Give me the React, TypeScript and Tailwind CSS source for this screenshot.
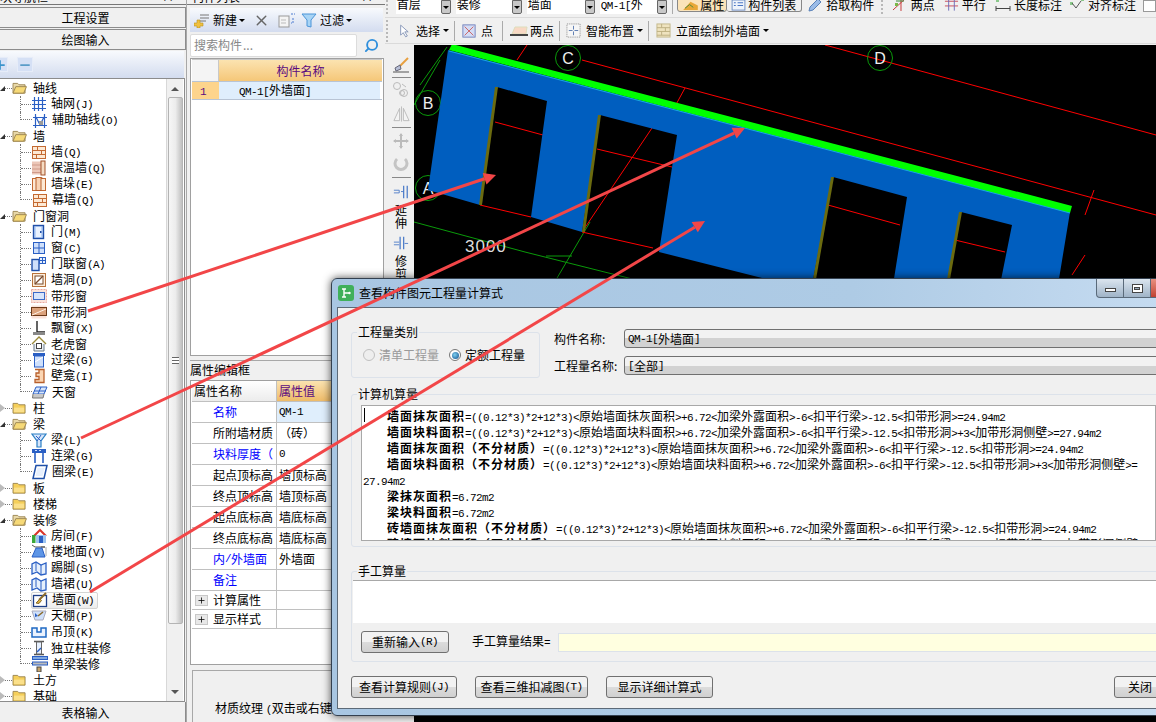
import React from 'react';
import { Search, X, Minus, Plus } from 'lucide-react';

// ascii runs are drawn narrower, the original uses a 6px wide bitmap latin
const Txt: React.FC<{ t: string }> = ({ t }) => (
  <>
    {t.split(/([\x20-\x7e]+)/).map((part, i) =>
      /[\x20-\x7e]/.test(part) ? (
        <span key={i} className="font-['Liberation_Mono',monospace] text-[11px] tracking-[-0.6px] font-normal whitespace-pre">
          {part}
        </span>
      ) : (
        <span key={i}>{part}</span>
      ),
    )}
  </>
);

const Ico: React.FC<{ children: React.ReactNode; className?: string }> = ({ children, className }) => (
  <svg viewBox="0 0 16 16" className={className ?? 'w-4 h-4 shrink-0'} fill="none" strokeWidth="1">
    {children}
  </svg>
);

const BL = '#2a5fc4';
const Brick = (
  <Ico>
    <rect x="1.5" y="2.5" width="13" height="12" fill="#fde9d4" stroke="#c46a32" />
    <path d="M1.5 6.5h13M1.5 10.5h13M6.5 2.500v4M10.5 6.500v4M5.5 10.500v4" stroke="#c46a32" />
  </Ico>
);
const Flag = (
  <Ico>
    <path d="M1 14V4l4-2 5 3 5-2v11l-5 1-4-3z" fill="#e6f0fc" stroke={BL} strokeWidth="1.3" />
    <path d="M5 2v9M10 5v10" stroke={BL} />
  </Ico>
);

const icons: Record<string, React.ReactNode> = {
  grid: (
    <Ico>
      <path d="M1 4.500h14M1 8.500h14M1 12.500h14M3.500 1v14M7.500 1v14M11.500 1v14" stroke={BL} strokeWidth="1.2" />
    </Ico>
  ),
  aux: (
    <Ico>
      <path d="M1 13.500h14M3.500 2v14M12.500 2v14M1 5.500l14 0M4 5l4 8 4-8" stroke={BL} strokeWidth="1.2" />
      <rect x="7" y="9" width="4" height="4" fill="#9a9a9a" />
    </Ico>
  ),
  brick: Brick,
  insul: (
    <Ico>
      <rect x="1" y="1.500" width="9" height="13" fill="#ecc7b8" />
      <path d="M1 5h9M1 9h9M1 12.500h9" stroke="#cf9a8a" />
      <rect x="10" y="1" width="4" height="14" fill="#f5dcc4" stroke="#a2522a" />
    </Ico>
  ),
  pier: (
    <Ico>
      <rect x="1.500" y="2.500" width="13" height="12" fill="#fde9d4" stroke="#c46a32" />
      <rect x="5" y="1.500" width="5" height="13" fill="#f8d3b4" stroke="#b8602c" />
      <path d="M10 1.500l2 1" stroke="#b8602c" />
    </Ico>
  ),
  door: (
    <Ico>
      <rect x="2.500" y="1.500" width="10" height="13" fill="#bcd4f8" stroke="#1f4fa8" strokeWidth="1.4" />
      <rect x="5" y="3" width="5" height="10" fill="#eaf2fe" />
      <rect x="9" y="7" width="1.500" height="2" fill="#1f4fa8" />
    </Ico>
  ),
  win: (
    <Ico>
      <rect x="2.500" y="2.500" width="11" height="11" fill="#cfe0fb" stroke="#2a5fc4" />
      <path d="M8 2.500v11M2.500 8h11" stroke="#2a5fc4" />
    </Ico>
  ),
  doorwin: (
    <Ico>
      <rect x="1" y="3.500" width="7" height="11" fill="#cfe0fb" stroke="#1f4fa8" strokeWidth="1.4" />
      <rect x="8.500" y="1.500" width="6" height="6" fill="#e7f0fd" stroke="#2a5fc4" />
      <path d="M11.500 1.500v6M8.500 4.500h6" stroke="#2a5fc4" />
    </Ico>
  ),
  hole: (
    <Ico>
      <rect x="1.500" y="1.500" width="13" height="13" fill="#fdeedd" stroke="#b8733c" />
      <rect x="4" y="4" width="8" height="8" fill="#fff" stroke="#7a4a2a" />
      <path d="M4 12l8-8" stroke="#7a4a2a" strokeWidth="1.3" />
    </Ico>
  ),
  stripwin: (
    <Ico>
      <rect x="0.500" y="1.500" width="15" height="13" fill="#fbe3da" stroke="#e8a8a0" strokeDasharray="2 1" />
      <rect x="2.500" y="4.500" width="11" height="7" fill="#d8e4fb" stroke="#3d6ac8" />
    </Ico>
  ),
  striphole: (
    <Ico>
      <rect x="0.500" y="1.500" width="15" height="13" fill="#fbe3da" />
      <rect x="0.500" y="3.500" width="15" height="8" fill="#dca27c" stroke="#6e3a18" />
      <path d="M1 11l14-6" stroke="#fff2e6" />
    </Ico>
  ),
  bay: (
    <Ico>
      <path d="M6 1v11h8" stroke="#222" strokeWidth="1.4" />
      <rect x="2" y="12" width="12" height="3" fill="#888" />
    </Ico>
  ),
  dormer: (
    <Ico>
      <path d="M1 8l7-7 7 7" stroke="#9a8a3a" strokeWidth="1.4" />
      <path d="M3 8v7h10V8" fill="#e8eef4" stroke="#6a7a8a" />
      <rect x="5.500" y="7.500" width="5" height="5" fill="#fff" stroke="#444" />
    </Ico>
  ),
  lintel: (
    <Ico>
      <rect x="2" y="1" width="12" height="3" fill="#2a5fc4" />
      <rect x="3.500" y="4" width="9" height="11" fill="#cfe0fb" stroke="#2a5fc4" />
      <path d="M12 5l-8 5" stroke="#fff" />
    </Ico>
  ),
  niche: (
    <Ico>
      <path d="M4 1.500h9v13H4v-3h4v-3H5V5h3V1.500" fill="#fbd6b4" stroke="#b8602c" strokeWidth="1.3" />
    </Ico>
  ),
  sky: (
    <Ico>
      <path d="M4 3h11l-3 7H1z" fill="#d8e6fb" stroke="#2a5fc4" />
      <path d="M9 3l-3 7M2 7h12" stroke="#2a5fc4" />
      <path d="M1 10l-.5 4H11l1-4" fill="#c8c8c8" stroke="#777" />
    </Ico>
  ),
  beam: (
    <Ico>
      <path d="M1 2h14L10 9v6H6V9z" fill="#d6e6fb" stroke="#2a7fc4" strokeWidth="1.2" />
      <path d="M5 4l5 5M10 3l-4 6" stroke="#2a5fc4" />
    </Ico>
  ),
  link: (
    <Ico>
      <rect x="1" y="1" width="14" height="4" fill="#2a5fc4" />
      <path d="M4 2.500h2M8 2.500h2" stroke="#cfe0fb" />
      <path d="M4 5v10M12 5v10" stroke="#2a5fc4" strokeWidth="1.6" />
    </Ico>
  ),
  ring: (
    <Ico>
      <path d="M4 1.500h11l-3 13H1z" fill="#fff" stroke="#1f4fa8" strokeWidth="1.5" />
      <path d="M5.500 4h7l-2 8h-7z" fill="#e7f0fd" />
    </Ico>
  ),
  room: (
    <Ico className="w-[16px] h-[16px] shrink-0">
      <path d="M3 8l6-6 6 6" stroke="#d8342a" strokeWidth="2" />
      <rect x="1" y="7" width="3.500" height="8" fill="#3aa83a" />
      <rect x="5" y="7" width="10" height="8" fill="#9cc4f0" />
      <rect x="8" y="8" width="4" height="7" fill="#2a5fc4" />
    </Ico>
  ),
  floor: (
    <Ico>
      <path d="M1 1l3 2 10 0-4 0" stroke="#555" />
      <path d="M5 4h6l3 9H1z" fill="#5d95e6" stroke="#2a5fc4" />
      <path d="M15 3v9" stroke="#aaa" />
    </Ico>
  ),
  skirt: Flag,
  wallface: (
    <Ico>
      <rect x="1.500" y="3.500" width="13" height="11" fill="#fff" stroke="#1f3f88" strokeWidth="1.3" />
      <path d="M14 1L7 8" stroke="#8a6a2a" strokeWidth="2" />
      <path d="M8 7L4 11l3 .5 2.500-3z" fill="#d8b040" stroke="#8a6a2a" />
    </Ico>
  ),
  ceiling: (
    <Ico>
      <path d="M1 3h14l-3 9H4z" fill="#cfe0fb" stroke="#aab" />
      <path d="M12 4L7 8" stroke="#8a6a2a" strokeWidth="1.6" />
      <path d="M4 5l3 3-3 1z" fill="#2a5fc4" />
    </Ico>
  ),
  hung: (
    <Ico>
      <path d="M1 4h5v4h4V4h5v9H1z" fill="#eaf2fe" stroke="#1f6ac4" strokeWidth="1.5" />
    </Ico>
  ),
  column: (
    <Ico>
      <path d="M3 1.500h10M3 14.500h10" stroke="#555" strokeWidth="1.6" />
      <rect x="5.500" y="2" width="5" height="12" fill="#e7f0fd" stroke="#666" />
      <path d="M6 12l4-4" stroke="#2a5fc4" strokeWidth="1.5" />
    </Ico>
  ),
  single: (
    <Ico>
      <rect x="0.500" y="0.500" width="15" height="3" fill="#7fa8e0" stroke="#2a5fc4" />
      <rect x="0.500" y="6" width="15" height="3" fill="#bcbcbc" stroke="#2a5fc4" />
      <rect x="5" y="11" width="4" height="5" fill="#c8a468" stroke="#444" />
    </Ico>
  ),
};

const Folder: React.FC<{ open?: boolean }> = ({ open }) => (
  <svg viewBox="0 0 16 14" className="w-[15px] h-[13px] shrink-0">
    <path d="M1 3V1.500h5L7.500 3H14v9H1z" fill={open ? '#e8d8a8' : '#f5cf5a'} stroke="#9a8450" />
    {open ? <path d="M1 12l3-7h11.500l-3 7z" fill="#f6d977" stroke="#9a8450" /> : <path d="M2 6h11v5H2z" fill="#fbe08a" />}
  </svg>
);

type Node = { name: string; open?: boolean; items?: [string, string][] };

const tree: Node[] = [
  { name: '轴线', open: true, items: [['轴网(J)', 'grid'], ['辅助轴线(O)', 'aux']] },
  { name: '墙', open: true, items: [['墙(Q)', 'brick'], ['保温墙(Q)', 'insul'], ['墙垛(E)', 'pier'], ['幕墙(Q)', 'brick']] },
  {
    name: '门窗洞',
    open: true,
    items: [
      ['门(M)', 'door'], ['窗(C)', 'win'], ['门联窗(A)', 'doorwin'], ['墙洞(D)', 'hole'], ['带形窗', 'stripwin'], ['带形洞', 'striphole'],
      ['飘窗(X)', 'bay'], ['老虎窗', 'dormer'], ['过梁(G)', 'lintel'], ['壁龛(I)', 'niche'], ['天窗', 'sky'],
    ],
  },
  { name: '柱' },
  { name: '梁', open: true, items: [['梁(L)', 'beam'], ['连梁(G)', 'link'], ['圈梁(E)', 'ring']] },
  { name: '板' },
  { name: '楼梯' },
  {
    name: '装修',
    open: true,
    items: [
      ['房间(F)', 'room'], ['楼地面(V)', 'floor'], ['踢脚(S)', 'skirt'], ['墙裙(U)', 'skirt'], ['墙面(W)', 'wallface'], ['天棚(P)', 'ceiling'],
      ['吊顶(K)', 'hung'], ['独立柱装修', 'column'], ['单梁装修', 'single'],
    ],
  },
  { name: '土方' },
  { name: '基础' },
];

const NavButton: React.FC<{ label: string }> = ({ label }) => (
  <div className="h-[21px] mb-px pr-[14px] flex items-center justify-center bg-[#f0f0f0] border border-[#8c8c8c] border-l-0 text-[12px] leading-4 text-black">
    {label}
  </div>
);

const LeftPanel = () => (
  <aside className="w-[186px] h-full shrink-0 flex flex-col bg-[#f0f0f0]">
    <div className="h-[5px] overflow-hidden border-b border-[#777] flex justify-between pr-3">
      <span className="text-[12px] leading-4 -mt-[11px]">块导航栏</span>
      <span className="text-[12px] leading-4 -mt-[11px]">- ×</span>
    </div>
    <div className="pt-[2px]">
      <NavButton label="工程设置" />
      <NavButton label="绘图输入" />
    </div>
    <div className="h-[27px] flex items-center gap-[9px] -ml-2 bg-gradient-to-b from-[#f8fafd] to-[#d3dcef] mr-[2px]">
      <span className="w-4 h-[15px] flex items-center justify-center bg-[#d5e0f5] border border-[#e6ecf8]">
        <Plus size={14} strokeWidth={3} className="text-[#3a94cc]" />
      </span>
      <span className="w-4 h-[15px] flex items-center justify-center bg-[#d5e0f5] border border-[#e6ecf8]">
        <Minus size={14} strokeWidth={3} className="text-[#5a9cc8]" />
      </span>
    </div>
    <div className="flex-1 flex min-h-0 bg-white border border-l-0 border-[#8c8c8c] mr-px overflow-hidden">
      <div className="flex-1 pt-[1px] overflow-hidden text-[12px] leading-4 text-black">
        {tree.map((n) => (
          <div key={n.name}>
            <div className="h-4 flex items-center">
              <span className="w-[5px] flex justify-end">
                <span className={n.open ? 'w-0 h-0 border-l-[5px] border-l-transparent border-b-[5px] border-b-[#333]' : 'w-0 h-0 -ml-1 border-y-[4px] border-y-transparent border-l-[5px] border-l-[#bbb]'} />
              </span>
              <span className="w-[7px] border-t border-dotted border-[#777]" />
              <Folder open={n.open} />
              <span className="ml-[6px]">{n.name}</span>
            </div>
            {n.items?.map(([label, icon], i) => {
              const last = i === n.items!.length - 1;
              const picked = label === '墙面(W)';
              return (
                <div key={label} className="h-4 flex items-center pl-[20px]">
                  {last ? (
                    <span className="w-[12px] h-2 self-start border-l border-b border-dotted border-[#777]" />
                  ) : (
                    <span className="w-[11px] shrink-0 h-full flex items-center border-l border-dotted border-[#777]">
                      <span className="w-full border-t border-dotted border-[#777]" />
                    </span>
                  )}
                  <div className={picked ? 'h-[17px] flex items-center rounded-[2px] border border-[#d4d4d4] bg-gradient-to-b from-white to-[#ececec] pr-[3px]' : 'flex items-center'}>
                    {icons[icon]}
                    <span className="ml-[4px]">
                      <Txt t={label} />
                    </span>
                  </div>
                </div>
              );
            })}
          </div>
        ))}
      </div>
      <div className="w-[17px] shrink-0 flex flex-col items-center bg-[#f0f0f0] border-l border-[#d8d8d8] mr-px">
        <span className="mt-[8px] w-0 h-0 border-x-[4px] border-x-transparent border-b-[4px] border-b-[#555]" />
        <div className="mt-[6px] w-[15px] h-[527px] flex items-center justify-center rounded-[2px] border border-[#b4b4b4] bg-gradient-to-r from-[#f6f6f6] via-[#ececec] to-[#bfbfbf]">
          <span className="w-[7px] h-[7px] border-y border-[#666] bg-[linear-gradient(#fff_35%,#666_35%,#666_65%,#fff_65%)]" />
        </div>
        <span className="mt-auto mb-[7px] w-0 h-0 border-x-[4px] border-x-transparent border-t-[4px] border-t-[#555]" />
      </div>
    </div>
    <div className="h-[20px] pr-[14px] pt-px flex items-center justify-center border-r border-[#8c8c8c] text-[12px] leading-4">表格输入</div>
  </aside>
);

const propRows: [string, string, boolean][] = [
  ['名称', 'QM-1', true],
  ['所附墙材质', '（砖）', false],
  ['块料厚度（', '0', true],
  ['起点顶标高', '墙顶标高', false],
  ['终点顶标高', '墙顶标高', false],
  ['起点底标高', '墙底标高', false],
  ['终点底标高', '墙底标高', false],
  ['内/外墙面', '外墙面', true],
  ['备注', '', true],
];

const MidPanel = () => (
  <section className="w-[199px] h-full shrink-0 flex flex-col bg-[#f0f0f0] border-l border-[#a8a8a8] text-[12px] leading-4 text-black">
    <div className="h-[5px] overflow-hidden border-b border-[#777] flex justify-between pl-[5px] pr-3">
      <span className="-mt-[11px]">构件列表</span>
      <span className="-mt-[11px]">- ×</span>
    </div>
    <div className="mt-[3px] ml-[3px] mr-[2px] h-[24px] flex items-center bg-gradient-to-b from-[#f8fafd] to-[#d3dcef]">
      <svg viewBox="0 0 16 16" className="w-4 h-4 ml-[4px]">
        <path d="M6 3h9M6 6h9M6 9h6" stroke="#777" />
        <path d="M3 8h3v3h3v3H6v2H3v-2H0v-3h3z" fill="#f0c040" stroke="#b89020" strokeWidth="0.6" />
      </svg>
      <span className="ml-[3px]">新建</span>
      <span className="ml-[2px] w-0 h-0 border-x-[3px] border-x-transparent border-t-[3px] border-t-black" />
      <X size={17} strokeWidth={2} className="ml-[8px] text-[#666]" />
      <svg viewBox="0 0 18 16" className="w-[18px] h-4 ml-[8px]">
        <rect x="1" y="4" width="10" height="11" fill="#f4f4f4" stroke="#999" />
        <path d="M3 8h5M3 11h5" stroke="#bbb" />
        <path d="M13 2h4M15 6v5h-2" stroke="#4a7ad0" strokeDasharray="2 1" fill="none" />
      </svg>
      <svg viewBox="0 0 16 16" className="w-4 h-4 ml-[5px]">
        <path d="M1 2h14L10 8v7l-4-1V8z" fill="#a8d4f5" stroke="#4a94d8" />
      </svg>
      <span className="ml-[3px]">过滤</span>
      <span className="ml-[2px] w-0 h-0 border-x-[3px] border-x-transparent border-t-[3px] border-t-black" />
    </div>
    <div className="ml-[3px] h-[26px] flex items-center">
      <div className="w-[167px] h-[23px] bg-white border border-[#dcdcdc] rounded-[2px] pl-[3px] flex items-center text-[#888]">
        搜索构件<span className="text-[#888] ml-px">...</span>
      </div>
      <Search size={15} strokeWidth={3} className="ml-[7px] text-[#2f8fdc] -scale-x-100" />
    </div>
    <div className="ml-[3px] mr-[1px] flex-1 min-h-0 bg-white border border-[#a0a0a0] p-px pt-0">
      <div className="flex h-[22px] border-t border-[#c8c8c8]">
        <div className="w-[27px] bg-[#f4f4f4] border-r border-[#c8c8c8]" />
        <div className="flex-1 flex items-center justify-center bg-gradient-to-b from-[#fbe3b0] to-[#f5c778] text-[#5a0a80]">构件名称</div>
      </div>
      <div className="flex h-[19px] border-y border-[#b8c4d4] items-center">
        <div className="w-[27px] h-full bg-[#fdd48c] pl-[8px] text-[#5a0a80]"><Txt t="1" /></div>
        <div className="flex-1 h-full bg-[#dfeefc] pl-[20px] mr-[2px]"><Txt t="QM-1[" />外墙面<Txt t="]" /></div>
      </div>
    </div>
    <div className="mt-[4px] h-[16px] ml-[3px] border-t border-[#a8a8a8] pt-px">属性编辑框</div>
    <div className="mt-[4px] ml-[3px] h-[285px] shrink-0 bg-white border border-[#a0a0a0] pl-[1px]">
      <div className="flex h-[21px] border-b border-[#c0c0c0]">
        <div className="w-[85px] pl-[2px] flex items-center border-r border-[#c0c0c0] bg-gradient-to-b from-white to-[#ececec]">属性名称</div>
        <div className="flex-1 pl-[2px] flex items-center bg-gradient-to-b from-[#fbe3b0] to-[#eebb68] text-[#5a0a80]">属性值</div>
      </div>
      {propRows.map(([k, v, blue], i) => (
        <div key={k} className="flex h-[21px] border-b border-[#c0c0c0]">
          <div className={blue ? 'w-[85px] shrink-0 pl-[21px] flex items-center border-r border-[#c0c0c0] text-[#0000ff]' : 'w-[85px] shrink-0 pl-[21px] flex items-center border-r border-[#c0c0c0]'}>
            <Txt t={k} />
          </div>
          <div className={i === 0 ? 'flex-1 pl-[2px] flex items-center bg-[#dfeefc]' : 'flex-1 pl-[2px] flex items-center'}>
            <Txt t={v} />
          </div>
        </div>
      ))}
      {['计算属性', '显示样式'].map((k) => (
        <div key={k} className="flex h-[19px] border-b border-[#c0c0c0]">
          <div className="w-[85px] shrink-0 pl-[3px] flex items-center gap-[5px] border-r border-[#c0c0c0]">
            <span className="w-[13px] h-[11px] flex items-center justify-center bg-[#e8e8e8] border border-[#c8c8c8]">
              <Plus size={9} strokeWidth={2} className="text-black" />
            </span>
            {k}
          </div>
        </div>
      ))}
    </div>
    <div className="h-[52px] mt-[5px] ml-[5px] border-t border-l border-[#a8a8a8] pt-[29px] pl-[22px] whitespace-nowrap overflow-hidden">
      材质纹理 <Txt t="(" />双击或右键选择<Txt t=")" />
    </div>
  </section>
);

const Combo: React.FC<{ label: string; w: string }> = ({ label, w }) => (
  <div className={`${w} h-[14px] mr-[5px] shrink-0 flex justify-between bg-white overflow-hidden`}>
    <span className="pl-[1px] -mt-[4px] whitespace-nowrap"><Txt t={label} /></span>
    <span className="w-[10px] h-full flex items-center justify-center bg-[#c8c8c8] border border-[#666] rounded-b-[2px]">
      <span className="w-0 h-0 border-x-[3px] border-x-transparent border-t-[3px] border-t-black" />
    </span>
  </div>
);

const TopItem: React.FC<{ icon: React.ReactNode; label: string; className?: string }> = ({ icon, label, className }) => (
  <div className={`${className ?? ''} h-[14px] shrink-0 flex items-center gap-[3px] whitespace-nowrap -mt-[2px]`}>
    {icon}
    <span>{label}</span>
  </div>
);

const Sep = () => <span className="block w-px h-[20px] bg-[#aaa]" />;

const Caret = () => <span className="ml-[3px] w-0 h-0 border-x-[3px] border-x-transparent border-t-[3px] border-t-black" />;

const TopBars = () => (
  <div className="h-[45px] shrink-0 flex flex-col text-[12px] leading-4 text-black bg-[#f0f0f0]">
    <div className="h-[14px] flex items-start overflow-hidden">
      <span className="ml-px mr-[7px] w-[3px] h-[14px] border-l-2 border-dotted border-[#b8b8b8]" />
      <Combo label="首层" w="w-[55px]" />
      <Combo label="装修" w="w-[66px]" />
      <Combo label="墙面" w="w-[68px]" />
      <Combo label="QM-1[外" w="w-[67px]" />
      <span className="w-px h-[14px] bg-[#aaa] mr-[5px]" />
      <div className="w-[50px] h-[14px] -mt-[2px] flex items-center gap-[2px] pl-[5px] border border-[#888] rounded-b-[3px] bg-[#fbe3b8] shrink-0">
        <svg viewBox="0 0 16 12" className="w-[15px] h-[11px]"><path d="M0 11l8-9 8 4v5z" fill="#e8a838" /><path d="M2 9l5-4 4 3" stroke="#4a8a3a" fill="none" /></svg>
        <span>属性</span>
      </div>
      <div className="w-[75px] h-[14px] -mt-[2px] flex items-center gap-[2px] pl-[4px] border border-l-0 border-[#888] rounded-b-[3px] shrink-0">
        <svg viewBox="0 0 16 12" className="w-[15px] h-[11px]"><rect x="1" y="0" width="14" height="11" fill="#eef3fb" stroke="#6a8ac0" /><path d="M3 3h2M3 6h2M7 3h6M7 6h6" stroke="#3a6ac0" /></svg>
        <span className="whitespace-nowrap">构件列表</span>
      </div>
      <TopItem
        className="ml-[5px] w-[68px]"
        label="拾取构件"
        icon={<svg viewBox="0 0 16 16" className="w-4 h-4"><path d="M2 14l1-4 8-8 3 3-8 8z" fill="#9bbce8" stroke="#5a82b8" /></svg>}
      />
      <span className="w-[3px] h-[14px] border-l-2 border-dotted border-[#b8b8b8] ml-[6px] mr-[8px]" />
      <TopItem
        className="w-[43px]"
        label="两点"
        icon={<svg viewBox="0 0 16 16" className="w-4 h-4" fill="none"><path d="M1 13L14 1M9 1v13" stroke="#c83c3c" /><path d="M4 4l8 0" stroke="#3a8a3a" /><rect x="3" y="6" width="3" height="3" fill="#7ab84a" /></svg>}
      />
      <TopItem
        className="ml-[9px] w-[42px]"
        label="平行"
        icon={<svg viewBox="0 0 16 16" className="w-4 h-4" fill="none"><path d="M1 4h14M1 9h14" stroke="#c84a5a" /><path d="M5 0v14M11 0v14" stroke="#6a6ab8" /></svg>}
      />
      <TopItem
        className="ml-[9px] w-[68px]"
        label="长度标注"
        icon={<svg viewBox="0 0 16 16" className="w-4 h-4" fill="none"><rect x="1" y="2" width="3" height="3" fill="#8ac88a" /><path d="M1 9v5M15 9v5M1 11.500h14" stroke="#444" /></svg>}
      />
      <TopItem
        className="ml-[6px] w-[68px]"
        label="对齐标注"
        icon={<svg viewBox="0 0 16 16" className="w-4 h-4" fill="none"><rect x="1" y="5" width="3" height="3" fill="#8ac88a" /><rect x="12" y="1" width="3" height="3" fill="#8ac88a" /><path d="M3 6l4 5 5-7" stroke="#555" /></svg>}
      />
      <div className="ml-[6px] w-[20px] h-[12px] bg-white border border-[#999]" />
    </div>
    <div className="mt-[3px] h-[27px] flex items-center border-t border-[#dadada] border-b">
      <span className="ml-px mr-[10px] w-[3px] h-[22px] border-l-2 border-dotted border-[#b8b8b8]" />
      <svg viewBox="0 0 12 16" className="w-[10px] h-[14px]"><path d="M2 1v12l3-3 3 5 2-1-3-5h4z" fill="#fff" stroke="#7a8ab0" /></svg>
      <span className="ml-[7px]">选择</span>
      <Caret />
      <span className="ml-[5px] mr-[7px]"><Sep /></span>
      <svg viewBox="0 0 16 16" className="w-[14px] h-[14px]"><rect x="1" y="1" width="14" height="14" fill="#d4dcf5" stroke="#6a7ab8" /><path d="M3 3l10 10M13 3L3 13" stroke="#c85a5a" /></svg>
      <span className="ml-[5px]">点</span>
      <span className="ml-[9px] mr-[7px]"><Sep /></span>
      <svg viewBox="0 0 18 14" className="w-[18px] h-[14px]"><path d="M2 10l3-7h12l-1 7z" fill="#f8d8c4" stroke="#ddb" /><rect x="0" y="10" width="18" height="2" fill="#444" /></svg>
      <span className="ml-[2px]">两点</span>
      <span className="ml-[5px] mr-[6px]"><Sep /></span>
      <svg viewBox="0 0 16 16" className="w-[15px] h-[15px]" fill="none"><rect x="1" y="1" width="14" height="14" fill="#f6f6f6" stroke="#888" strokeDasharray="1 1" /><path d="M8 3v4M8 9v4M3 8h4M9 8h4" stroke="#5a7ab0" /></svg>
      <span className="ml-[5px]">智能布置</span>
      <Caret />
      <span className="ml-[5px] mr-[7px]"><Sep /></span>
      <svg viewBox="0 0 16 16" className="w-[15px] h-[15px]"><rect x="1" y="1" width="14" height="14" fill="#efe3bf" stroke="#c4b88c" /><path d="M1 5h14M1 9h14M1 13h14M6 1v4M10 5v4M6 9v4" stroke="#bcae80" /></svg>
      <span className="ml-[5px]">立面绘制外墙面</span>
      <Caret />
    </div>
  </div>
);

const VerticalTools = () => (
  <div className="w-[29px] shrink-0 pl-[3px] h-full bg-[#f0f0f0] flex flex-col items-center text-[12px] leading-[13px] text-black">
    <svg viewBox="0 0 18 16" className="w-[18px] h-4 mt-[12px]"><path d="M1 15h16" stroke="#555" /><path d="M16 1L8 9" stroke="#e8a040" strokeWidth="2" /><path d="M8 8l-5 3 1 3 5-2z" fill="#b8c0d8" stroke="#667" /></svg>
    <span className="w-[19px] border-t border-[#888] mt-[4px]" />
    <svg viewBox="0 0 18 16" className="w-[18px] h-4 mt-[4px]"><circle cx="5" cy="4" r="3.500" fill="none" stroke="#bbb" /><circle cx="12" cy="11" r="3.500" fill="none" stroke="#bbb" /><circle cx="10" cy="11" r="2.500" fill="none" stroke="#bbb" /><path d="M10 2l4 3" stroke="#bbb" /></svg>
    <svg viewBox="0 0 18 16" className="w-[17px] h-4 mt-[8px]"><path d="M9 0v16" stroke="#bbb" /><path d="M7 2v13H1zM11 2v13h6z" fill="#f4f4f4" stroke="#bbb" /></svg>
    <span className="w-[19px] border-t border-[#888] mt-[5px]" />
    <svg viewBox="0 0 16 16" className="w-4 h-4 mt-[5px]"><path d="M8 1v14M1 8h14" stroke="#bbb" strokeWidth="2" /><path d="M8 0l2 3H6zM8 16l2-3H6zM0 8l3-2v4zM16 8l-3-2v4z" fill="#bbb" /></svg>
    <svg viewBox="0 0 16 16" className="w-4 h-4 mt-[7px]"><path d="M12 3a6 6 0 1 1-8 0" fill="none" stroke="#c4c4c4" strokeWidth="3" /></svg>
    <span className="w-[19px] border-t border-[#888] mt-[5px]" />
    <svg viewBox="0 0 18 16" className="w-[16px] h-4 mt-[6px]"><path d="M12 1v14M16 1v14" stroke="#4a7ac8" strokeWidth="1.400" /><path d="M1 6h6v3H1M9 7.500h3" stroke="#4a7ac8" fill="none" /></svg>
    <span className="mt-[3px]">延</span>
    <span>伸</span>
    <svg viewBox="0 0 18 16" className="w-[16px] h-4 mt-[6px]"><path d="M8 1v14M12 1v14" stroke="#4a7ac8" strokeWidth="1.400" /><path d="M1 7h6M1 10h6M13 8.500h4" stroke="#4a7ac8" /></svg>
    <span className="mt-[3px]">修</span>
    <span>剪</span>
  </div>
);

const RED = '#ff0000';
const GREEN = '#0a9a0a';

const Axis: React.FC<{ x: number; y: number; t: string }> = ({ x, y, t }) => (
  <>
    <circle cx={x} cy={y} r="12.500" fill="none" stroke={GREEN} />
    <text x={x} y={y + 6} textAnchor="middle" fill="#eeeeee" fontSize="16" fontFamily="Liberation Sans, sans-serif">
      {t}
    </text>
  </>
);

const Viewport = () => (
  <svg viewBox="414 45 742 677" className="flex-1 h-full bg-black">
    <g stroke={GREEN} fill="none">
      <path d="M420 85L447 47M414 222L525 252L700 296M550 290L590 222M546 256h26M440 60L414 105" />
    </g>
    <g stroke={RED} fill="none">
      <path d="M582 60L1156 215M527 45L517 60M685 88L673 110M825 45L1156 135M1094 190L1085 215M1072 275L1085 255" />
      <path d="M495 122L543 135M480 205L531 217M597 149L672 167M582 232L653 248M652 128L582 232M828 205L900 225M955 240L1005 252" />
    </g>
    <Axis x={568} y={58} t="C" />
    <Axis x={880} y={58} t="D" />
    <Axis x={428} y={103} t="B" />
    <Axis x={428} y={188} t="A" />
    <polygon
      fill="#005ebf"
      points="448,50 1070,212 1058,285 1000,285 1012,225 961,212 948,285 893,285 907,197 833,177 812,285 790,285 659,252 677,135 600,115 582,232 531,217 547,101 497,87 480,205 428,190"
    />
    <polygon fill="#00ff00" points="452,44 1072,206 1070,213 449,50" />
    <path d="M449 51L1070 213" stroke="#18a8e0" />
    <g fill="#6b6b10">
      <polygon points="495,87 498,87 482,205 479,205" />
      <polygon points="598,115 601,115 585,232 582,232" />
      <polygon points="831,177 834,177 815,285 812,285" />
      <polygon points="959,212 962,212 949,285 946,285" />
    </g>
    <text x="465" y="252" fill="#dddddd" fontSize="17" fontFamily="Liberation Sans, sans-serif" letterSpacing="1">
      3000
    </text>
  </svg>
);

const formula1 = '=((0.12*3)*2+12*3)<';
const lines: { b?: string; t?: string; plain?: string }[] = [
  { b: '墙面抹灰面积', t: formula1 + '原始墙面抹灰面积>+6.72<加梁外露面积>-6<扣平行梁>-12.5<扣带形洞>=24.94m2' },
  { b: '墙面块料面积', t: formula1 + '原始墙面块料面积>+6.72<加梁外露面积>-6<扣平行梁>-12.5<扣带形洞>+3<加带形洞侧壁>=27.94m2' },
  { b: '墙面抹灰面积（不分材质）', t: formula1 + '原始墙面抹灰面积>+6.72<加梁外露面积>-6<扣平行梁>-12.5<扣带形洞>=24.94m2' },
  { b: '墙面块料面积（不分材质）', t: formula1 + '原始墙面块料面积>+6.72<加梁外露面积>-6<扣平行梁>-12.5<扣带形洞>+3<加带形洞侧壁>=' },
  { plain: '27.94m2' },
  { b: '梁抹灰面积', t: '=6.72m2' },
  { b: '梁块料面积', t: '=6.72m2' },
  { b: '砖墙面抹灰面积（不分材质）', t: formula1 + '原始墙面抹灰面积>+6.72<加梁外露面积>-6<扣平行梁>-12.5<扣带形洞>=24.94m2' },
  { b: '砖墙面块料面积（不分材质）', t: formula1 + '原始墙面块料面积>+6.72<加梁外露面积>-6<扣平行梁>-12.5<扣带形洞>+3<加带形洞侧壁>=27.94m2' },
];

const Btn: React.FC<{ w: string; children: React.ReactNode; className?: string }> = ({ w, children, className }) => (
  <button className={`${w} ${className ?? ''} h-[22px] shrink-0 flex items-center justify-center rounded-[3px] border border-[#707070] bg-[linear-gradient(#f2f2f2_50%,#dcdcdc_50%,#d0d0d0)] text-[12px] leading-4 whitespace-nowrap`}>
    {children}
  </button>
);

const Group: React.FC<{ title: string; className: string; children: React.ReactNode }> = ({ title, className, children }) => (
  <div className={`relative rounded-[3px] border border-[#dce2ea] ${className}`}>
    <span className="absolute left-[5px] -top-[9px] px-px bg-[#f0f0f0] leading-4">{title}</span>
    {children}
  </div>
);

const Field: React.FC<{ label: string; value: React.ReactNode; className?: string }> = ({ label, value, className }) => (
  <div className={`flex items-center ${className ?? ''}`}>
    <span className="w-[70px] shrink-0 whitespace-nowrap">{label}</span>
    <div className="flex-1 h-[19px] pl-[3px] flex items-center rounded-[3px] border border-[#707070] bg-[linear-gradient(#f2f2f2_50%,#d2d2d2_50%)]">{value}</div>
  </div>
);

const Radio: React.FC<{ on?: boolean }> = ({ on }) => (
  <span className={on ? 'w-[12px] h-[12px] rounded-full border border-[#777] bg-white flex items-center justify-center' : 'w-[12px] h-[12px] rounded-full border border-[#c0c0c0] bg-[#eeeeee]'}>
    {on && <span className="w-[7px] h-[7px] rounded-full bg-[radial-gradient(circle_at_40%_40%,#7fd0f0,#0a4a8a)]" />}
  </span>
);

const Dialog = () => (
  <div className="absolute left-[331px] top-[278px] w-[870px] h-[438px] rounded-t-[6px] rounded-bl-[6px] border border-[#33404f] bg-[linear-gradient(90deg,#a8c6e2,#aecbe5_60%,#c8ddf2)] shadow-[0_0_8px_rgba(0,0,0,0.7)] text-[12px] leading-4 text-black">
    <div className="h-[28px] flex items-center pl-[6px]">
      <span className="w-[16px] h-[16px] rounded-[3px] bg-[#3fb05a] flex items-center justify-center">
        <svg viewBox="0 0 12 12" className="w-3 h-3"><path d="M4 2v8M4 6h5M2 2h4M2 10h4" stroke="#fff" strokeWidth="1.400" /><circle cx="9.500" cy="6" r="1.200" fill="#fff" /></svg>
      </span>
      <span className="ml-[5px]">查看构件图元工程量计算式</span>
    </div>
    <div className="absolute left-[764px] top-0 h-[19px] flex rounded-b-[4px] border-x border-b border-[#5a6a7a] bg-gradient-to-b from-[#dbe5ef] to-[#a0b4c8]">
      <span className="w-[27px] flex items-center justify-center border-r border-[#5a6a7a]">
        <span className="w-[11px] h-[4px] mt-[4px] bg-white border border-[#444]" />
      </span>
      <span className="w-[27px] flex items-center justify-center border-r border-[#5a6a7a]">
        <span className="w-[11px] h-[9px] flex items-center justify-center bg-white border border-[#444]"><span className="w-[6px] h-[3px] bg-[#9ab] border border-[#444]" /></span>
      </span>
      <span className="w-[45px] bg-gradient-to-b from-[#e89080] to-[#c04030]" />
    </div>
    <div className="ml-[5px] h-[402px] border border-[#5c6a78] border-r-0 bg-[#f0f0f0] pl-[13px] pr-[34px] pt-[21px]">
      <div className="flex">
        <Group title="工程量类别" className="w-[189px] h-[46px] mt-[3px] shrink-0 flex items-center gap-[4px] pl-[11px]">
          <Radio />
          <span className="text-[#9a9a9a]">清单工程量</span>
          <span className="ml-[6px]"><Radio on /></span>
          <span>定额工程量</span>
        </Group>
        <div className="flex-1 ml-[14px]">
          <Field label="构件名称:" value={<><Txt t="QM-1[" />外墙面<Txt t="]" /></>} />
          <Field label="工程量名称:" className="mt-[8px]" value={<><Txt t="[" />全部<Txt t="]" /></>} />
        </div>
      </div>
      <Group title="计算机算量" className="mt-[16px] h-[153px] px-[9px] pt-[10px]">
        <div className="relative h-[136px] bg-white border border-[#a8a8a8] pl-[1px] pt-[2px] overflow-hidden">
          <span className="absolute left-[2px] top-[2px] w-px h-[14px] bg-black" />
          {lines.map((l, i) => (
            <div key={i} className={l.plain ? 'h-4 whitespace-nowrap' : 'h-4 pl-[24px] whitespace-nowrap'}>
              {l.plain && <Txt t={l.plain} />}
              {l.b && <span className="font-bold tracking-[1px]">{l.b}</span>}
              {l.t && <Txt t={l.t} />}
            </div>
          ))}
        </div>
      </Group>
      <Group title="手工算量" className="mt-[24px] h-[91px] px-px pt-[8px]">
        <div className="h-[43px] bg-white border-t border-[#a8a8a8]" />
        <div className="flex items-center mt-[8px] pl-[8px]">
          <Btn w="w-[88px]"><span>重新输入</span><Txt t="(R)" /></Btn>
          <span className="ml-[23px] w-[86px] whitespace-nowrap">手工算量结果<Txt t="=" /></span>
          <div className="flex-1 h-[19px] bg-[#ffffe0] border border-[#dce2ea]" />
        </div>
      </Group>
      <div className="flex mt-[14px] gap-[18px]">
        <Btn w="w-[106px]"><span>查看计算规则</span><Txt t="(J)" /></Btn>
        <Btn w="w-[113px]"><span>查看三维扣减图</span><Txt t="(T)" /></Btn>
        <Btn w="w-[107px]">显示详细计算式</Btn>
        <Btn w="w-[52px]" className="ml-auto border-[#3a8ac0]">关闭</Btn>
      </div>
    </div>
  </div>
);

const Arrow: React.FC<{ x1: number; y1: number; x2: number; y2: number }> = ({ x1, y1, x2, y2 }) => {
  const a = Math.atan2(y2 - y1, x2 - x1);
  const bx = x2 - Math.cos(a) * 12;
  const by = y2 - Math.sin(a) * 12;
  const nx = -Math.sin(a) * 6;
  const ny = Math.cos(a) * 6;
  return (
    <>
      <line x1={x1} y1={y1} x2={bx} y2={by} stroke="#f24648" strokeWidth="3" />
      <polygon points={`${x2},${y2} ${bx + nx},${by + ny} ${bx - nx},${by - ny}`} fill="#f24648" />
    </>
  );
};

export default function App() {
  return (
    <div className="relative w-[1156px] h-[722px] overflow-hidden flex bg-[#f0f0f0] font-['Noto_Sans_CJK_SC',sans-serif] text-[12px] leading-4">
      <LeftPanel />
      <MidPanel />
      <main className="flex-1 min-w-0 h-full flex flex-col">
        <TopBars />
        <div className="flex-1 min-h-0 flex">
          <VerticalTools />
          <Viewport />
        </div>
      </main>
      <Dialog />
      <svg className="absolute inset-0 pointer-events-none" width="1156" height="722" viewBox="0 0 1156 722">
        <Arrow x1={88} y1={311} x2={496} y2={175} />
        <Arrow x1={81} y1={438} x2={745} y2={128} />
        <Arrow x1={90} y1={592} x2={705} y2={221} />
      </svg>
    </div>
  );
}
